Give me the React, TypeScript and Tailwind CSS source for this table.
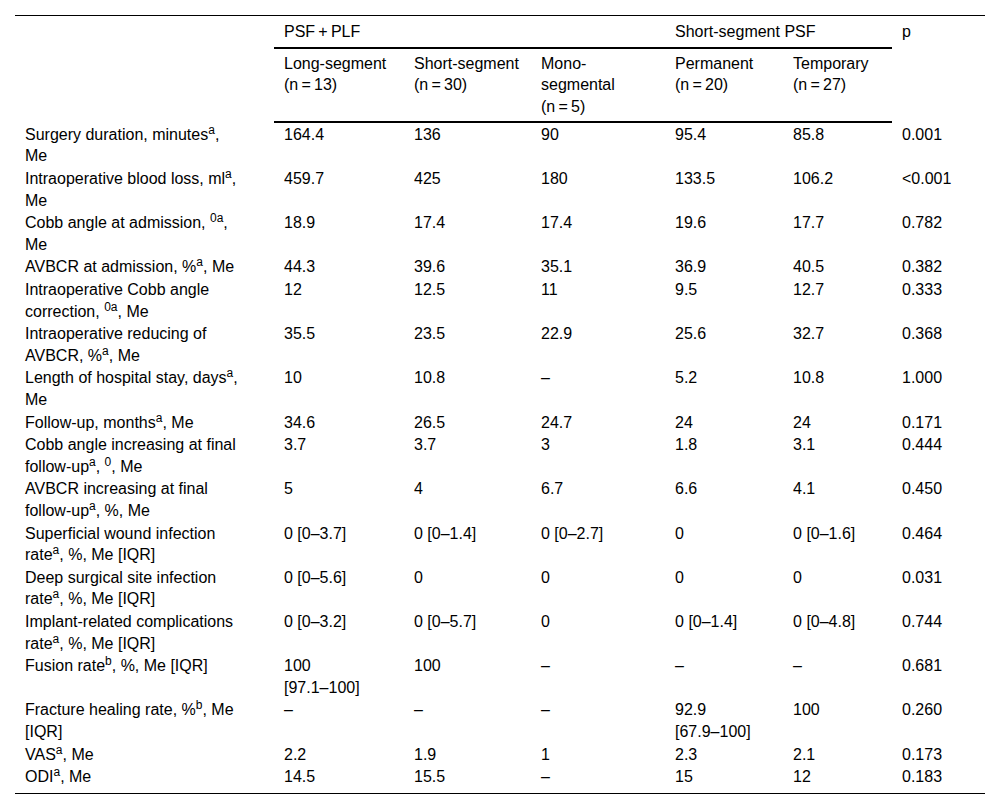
import type { ReactNode } from "react";

type Row = {
  label: ReactNode;
  values: string[];
  p: string;
};

const rows: Row[] = [
  { label: <>Surgery duration, minutes<sup>a</sup>, Me</>, values: ["164.4", "136", "90", "95.4", "85.8"], p: "0.001" },
  { label: <>Intraoperative blood loss, ml<sup>a</sup>, Me</>, values: ["459.7", "425", "180", "133.5", "106.2"], p: "<0.001" },
  { label: <>Cobb angle at admission, <sup>0a</sup>, Me</>, values: ["18.9", "17.4", "17.4", "19.6", "17.7"], p: "0.782" },
  { label: <>AVBCR at admission, %<sup>a</sup>, Me</>, values: ["44.3", "39.6", "35.1", "36.9", "40.5"], p: "0.382" },
  { label: <>Intraoperative Cobb angle correction, <sup>0a</sup>, Me</>, values: ["12", "12.5", "11", "9.5", "12.7"], p: "0.333" },
  { label: <>Intraoperative reducing of AVBCR, %<sup>a</sup>, Me</>, values: ["35.5", "23.5", "22.9", "25.6", "32.7"], p: "0.368" },
  { label: <>Length of hospital stay, days<sup>a</sup>, Me</>, values: ["10", "10.8", "–", "5.2", "10.8"], p: "1.000" },
  { label: <>Follow-up, months<sup>a</sup>, Me</>, values: ["34.6", "26.5", "24.7", "24", "24"], p: "0.171" },
  { label: <>Cobb angle increasing at final follow-up<sup>a</sup>, <sup>0</sup>, Me</>, values: ["3.7", "3.7", "3", "1.8", "3.1"], p: "0.444" },
  { label: <>AVBCR increasing at final follow-up<sup>a</sup>, %, Me</>, values: ["5", "4", "6.7", "6.6", "4.1"], p: "0.450" },
  { label: <>Superficial wound infection rate<sup>a</sup>, %, Me [IQR]</>, values: ["0 [0–3.7]", "0 [0–1.4]", "0 [0–2.7]", "0", "0 [0–1.6]"], p: "0.464" },
  { label: <>Deep surgical site infection rate<sup>a</sup>, %, Me [IQR]</>, values: ["0 [0–5.6]", "0", "0", "0", "0"], p: "0.031" },
  { label: <>Implant-related complications rate<sup>a</sup>, %, Me [IQR]</>, values: ["0 [0–3.2]", "0 [0–5.7]", "0", "0 [0–1.4]", "0 [0–4.8]"], p: "0.744" },
  { label: <>Fusion rate<sup>b</sup>, %, Me [IQR]</>, values: ["100 [97.1–100]", "100", "–", "–", "–"], p: "0.681" },
  { label: <>Fracture healing rate, %<sup>b</sup>, Me [IQR]</>, values: ["–", "–", "–", "92.9 [67.9–100]", "100"], p: "0.260" },
  { label: <>VAS<sup>a</sup>, Me</>, values: ["2.2", "1.9", "1", "2.3", "2.1"], p: "0.173" },
  { label: <>ODI<sup>a</sup>, Me</>, values: ["14.5", "15.5", "–", "15", "12"], p: "0.183" },
];

const groups = [
  { title: "Long-segment", n: "13" },
  { title: "Short-segment", n: "30" },
  { title: "Mono-segmental", n: "5" },
  { title: "Permanent", n: "20" },
  { title: "Temporary", n: "27" },
];

// right padding per value column, tuned so the cells wrap like the source
const valuePad = ["pr-[15px]", "pr-[10px]", "pr-[10px]", "pr-[10px]", "pr-[10px]"];

// keep "[a–b]" ranges in one piece so the break falls on the space before them
const Value = ({ text }: { text: string }) => {
  const i = text.indexOf(" [");
  if (i < 0) return <>{text}</>;
  return (
    <>
      {text.slice(0, i)} <span className="whitespace-nowrap">{text.slice(i + 1)}</span>
    </>
  );
};

const App = () => {
  return (
    <div className="min-h-screen bg-white px-[15px] pt-[15px] text-[16px] leading-[1.35] text-black font-['Liberation_Sans',Arial,sans-serif]">
      <table className="w-[970px] table-fixed border-separate border-spacing-0 border-t border-b border-black">
        <colgroup>
          <col className="w-[259px]" />
          <col className="w-[130px]" />
          <col className="w-[127px]" />
          <col className="w-[134px]" />
          <col className="w-[118px]" />
          <col className="w-[109px]" />
          <col className="w-[93px]" />
        </colgroup>
        <thead>
          <tr className="align-top">
            <th rowSpan={2} className="font-normal" />
            <th colSpan={3} className="border-b-2 border-black pl-[10px] pt-[5px] pb-[4px] text-left font-normal">
              PSF{"\u202F"}+{"\u202F"}PLF
            </th>
            <th colSpan={2} className="border-b-2 border-black pl-[10px] pt-[5px] pb-[4px] text-left font-normal">
              Short-segment PSF
            </th>
            <th rowSpan={2} className="pl-[10px] pt-[5px] text-left align-top font-normal">
              p
            </th>
          </tr>
          <tr className="align-top">
            {groups.map((g, i) => (
              <th
                key={g.title}
                className={`border-b-2 border-black pl-[10px] ${valuePad[i]} pt-[4px] pb-[4px] text-left font-normal`}
              >
                {g.title}
                <br />
                <span className="whitespace-nowrap">(n{"\u202F"}={"\u202F"}{g.n})</span>
              </th>
            ))}
          </tr>
        </thead>
        <tbody>
          {rows.map((row, r) => {
            const last = r === rows.length - 1;
            const pad = last ? "pt-[0.5px] pb-[5px]" : "py-[0.5px]";
            return (
              <tr key={r} className="align-top">
                <td className={`pl-[10px] pr-[33px] ${pad}`}>{row.label}</td>
                {row.values.map((v, i) => (
                  <td key={i} className={`pl-[10px] ${valuePad[i]} ${pad}`}>
                    <Value text={v} />
                  </td>
                ))}
                <td className={`pl-[10px] pr-[10px] ${pad}`}>{row.p}</td>
              </tr>
            );
          })}
        </tbody>
      </table>
    </div>
  );
};

export default App;
